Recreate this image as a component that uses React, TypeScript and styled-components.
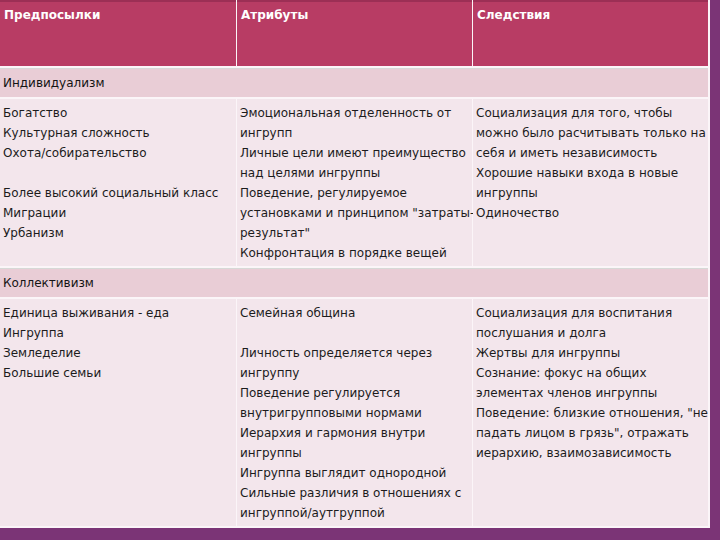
import { Fragment } from 'react'
import styled, { createGlobalStyle } from 'styled-components'

const GlobalStyle = createGlobalStyle`
  html, body {
    margin: 0;
    padding: 0;
  }
  body {
    width: 720px;
    height: 540px;
    overflow: hidden;
    background: #7b3476;
    font-family: "DejaVu Sans", Verdana, sans-serif;
  }
`

const Table = styled.div`
  width: 708px;
  display: grid;
  grid-template-columns: 236px 235px 235px;
  column-gap: 1px;
  row-gap: 2px;
  background: #fbf5f8;
  border-right: 2px solid #fbf5f8;
  border-bottom: 2px solid #fbf5f8;
`

const HeadCell = styled.div`
  height: 61px;
  padding: 3px 4px 0;
  border-top: 2px solid #9c2f55;
  background: #b83c64;
  color: #ffffff;
  font-size: 12px;
  font-weight: bold;
  line-height: 20px;
`

const GroupRow = styled.div`
  grid-column: 1 / -1;
  height: 28px;
  display: flex;
  align-items: center;
  padding: 0 3px;
  border-top: 1px solid #d6d9d6;
  background: #e9cdd6;
  color: #141414;
  font-size: 12px;
`

const BodyCell = styled.div`
  padding: 4px 3px 3px;
  background: #f3e6ec;
  color: #1c1c1c;
  font-size: 12px;
`

const Line = styled.div`
  height: 20px;
  line-height: 20px;
  white-space: nowrap;
`

type Group = {
  title: string
  cells: string[][]
}

const groups: Group[] = [
  {
    title: 'Индивидуализм',
    cells: [
      [
        'Богатство',
        'Культурная сложность',
        'Охота/собирательство',
        '',
        'Более высокий социальный класс',
        'Миграции',
        'Урбанизм',
      ],
      [
        'Эмоциональная отделенность от',
        'ингрупп',
        'Личные цели имеют преимущество',
        'над целями ингруппы',
        'Поведение, регулируемое',
        'установками и принципом "затраты-',
        'результат"',
        'Конфронтация в порядке вещей',
      ],
      [
        'Социализация для того, чтобы',
        'можно было расчитывать только на',
        'себя и иметь независимость',
        'Хорошие навыки входа в новые',
        'ингруппы',
        'Одиночество',
      ],
    ],
  },
  {
    title: 'Коллективизм',
    cells: [
      ['Единица выживания - еда', 'Ингруппа', 'Земледелие', 'Большие семьи'],
      [
        'Семейная община',
        '',
        'Личность определяется через',
        'ингруппу',
        'Поведение регулируется',
        'внутригрупповыми нормами',
        'Иерархия и гармония внутри',
        'ингруппы',
        'Ингруппа выглядит однородной',
        'Сильные различия в отношениях с',
        'ингруппой/аутгруппой',
      ],
      [
        'Социализация для воспитания',
        'послушания и долга',
        'Жертвы для ингруппы',
        'Сознание: фокус на общих',
        'элементах членов ингруппы',
        'Поведение: близкие отношения, "не',
        'падать лицом в грязь", отражать',
        'иерархию, взаимозависимость',
      ],
    ],
  },
]

const headers = ['Предпосылки', 'Атрибуты', 'Следствия']

export default function App() {
  return (
    <>
      <GlobalStyle />
      <Table>
        {headers.map((h) => (
          <HeadCell key={h}>{h}</HeadCell>
        ))}
        {groups.map((g) => (
          <Fragment key={g.title}>
            <GroupRow>{g.title}</GroupRow>
            {g.cells.map((lines, i) => (
              <BodyCell key={i}>
                {lines.map((l, j) => (
                  <Line key={j}>{l || '\u00a0'}</Line>
                ))}
              </BodyCell>
            ))}
          </Fragment>
        ))}
      </Table>
    </>
  )
}
